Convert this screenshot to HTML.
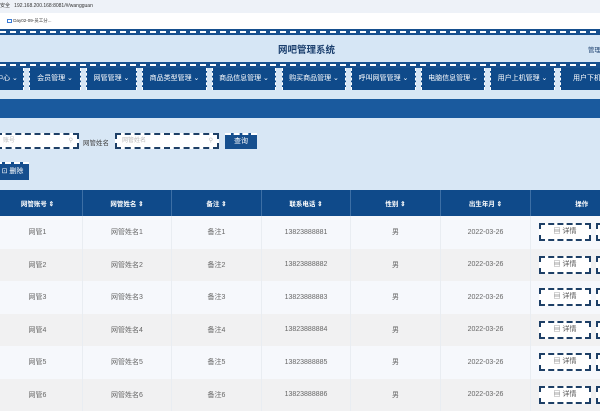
<!DOCTYPE html>
<html><head><meta charset="utf-8"><style>
*{margin:0;padding:0;box-sizing:border-box}
body{width:600px;height:400px;overflow:hidden;position:relative;background:#d8e7f5;font-family:"Liberation Sans","Noto Sans CJK SC",sans-serif;font-size:7px;color:#555}
.a{position:absolute;white-space:nowrap}
.dash{background:#164f8e;background-image:repeating-linear-gradient(90deg,#fff 0 6px,transparent 6px 10px);background-size:100% 2px;background-repeat:no-repeat;background-position:0 2px}
.nav{position:absolute;top:68px;height:22px;background:#0f4a8a;color:#fff;text-align:center;line-height:22px;font-size:7px;border-left:1px dashed #fff;border-right:1px dashed #fff;white-space:nowrap;overflow:hidden}
.inp{position:absolute;height:16px;background:#fff;border:2px dashed #1d3f66;color:#bbb;font-size:6px;line-height:12px;padding-left:5px;white-space:nowrap}
.btn{position:absolute;background:#164f8e;color:#fff;font-size:7px;text-align:center;border-top:2px dashed #fff;white-space:nowrap}
table{position:absolute;left:-8px;top:190px;border-collapse:collapse;width:640px;table-layout:fixed}
th{background:#0f4a8a;color:#fff;font-size:6.5px;height:26px;border-left:1px solid #3d6fa5;font-weight:bold;white-space:nowrap;overflow:hidden}
td{height:32.5px;text-align:center;font-size:7px;color:#666;border-left:1px solid #e9edf2;white-space:nowrap;overflow:hidden;padding:0}
tr:nth-child(odd) td{background:#f1f1f2}
tr:nth-child(even) td{background:#f6f8fc}
.ob{display:inline-block;width:52px;height:18px;border:2px dashed #1d3f66;background:#fff;line-height:14px;font-size:7px;color:#555;margin-right:5px;text-align:center;vertical-align:middle}
</style></head><body>
<div class="a" style="left:0;top:0;width:600px;height:13px;background:#eef2f8;font-size:5px;line-height:13px;color:#333">安全 &nbsp;&nbsp;192.168.200.168:8081/#/wangguan</div>
<div class="a" style="left:0;top:13px;width:600px;height:16px;background:#fff;font-size:4.5px;line-height:16px;color:#333;padding-left:7px"><span style="display:inline-block;width:5px;height:4px;border:1px solid #3a7bd5;vertical-align:middle"></span> Day02-09-员工分...</div>
<div class="a dash" style="left:0;top:29px;width:600px;height:6px"></div>
<div class="a" style="left:0;top:35px;width:600px;height:27px;background:#d6e6f5"></div>
<div class="a" style="left:278px;top:42px;font-size:9.5px;font-weight:bold;color:#1b3f6e">网吧管理系统</div>
<div class="a" style="left:588px;top:44px;font-size:6.5px;color:#1b3f6e">管理</div>
<div class="a dash" style="left:0;top:62px;width:600px;height:6px"></div>
<div class="a" style="left:0;top:68px;width:600px;height:22px;background:#d6e6f5"></div>
<div class="nav" style="left:-10px;width:34px">中心 ⌄</div>
<div class="nav" style="left:29px;width:52px">会员管理 ⌄</div>
<div class="nav" style="left:86px;width:51px">网管管理 ⌄</div>
<div class="nav" style="left:142px;width:65px">商品类型管理 ⌄</div>
<div class="nav" style="left:212px;width:64px">商品信息管理 ⌄</div>
<div class="nav" style="left:282px;width:64px">购买商品管理 ⌄</div>
<div class="nav" style="left:351px;width:65px">呼叫网管管理 ⌄</div>
<div class="nav" style="left:421px;width:64px">电脑信息管理 ⌄</div>
<div class="nav" style="left:490px;width:65px">用户上机管理 ⌄</div>
<div class="nav" style="left:560px;width:60px;text-align:left;padding-left:12px">用户下机</div>
<div class="a" style="left:0;top:99px;width:600px;height:19px;background:#1a5a9e"></div>
<div class="inp" style="left:-4px;top:133px;width:83px">账号<span style="float:right;margin-right:4px">⚲</span></div>
<div class="a" style="left:83px;top:137px;font-size:6.5px;color:#444">网管姓名</div>
<div class="inp" style="left:115px;top:133px;width:104px">网管姓名<span style="float:right;margin-right:4px">⚲</span></div>
<div class="btn" style="left:225px;top:133px;width:32px;height:16px;line-height:13px">查询</div>
<div class="btn" style="left:-4px;top:162px;width:33px;height:18px;line-height:15px">⊡ 删除</div>
<table>
<colgroup><col style="width:90px"><col style="width:89px"><col style="width:90px"><col style="width:89px"><col style="width:90px"><col style="width:90px"><col style="width:102px"></colgroup>
<tr><th>网管账号 ⇕</th><th>网管姓名 ⇕</th><th>备注 ⇕</th><th>联系电话 ⇕</th><th>性别 ⇕</th><th>出生年月 ⇕</th><th>操作</th></tr>
<tr><td>网管1</td><td>网管姓名1</td><td>备注1</td><td>13823888881</td><td>男</td><td>2022-03-26</td><td style="text-align:left;padding-left:8px"><span class="ob">▤ 详情</span><span class="ob">✎ 修</span></td></tr>
<tr><td>网管2</td><td>网管姓名2</td><td>备注2</td><td>13823888882</td><td>男</td><td>2022-03-26</td><td style="text-align:left;padding-left:8px"><span class="ob">▤ 详情</span><span class="ob">✎ 修</span></td></tr>
<tr><td>网管3</td><td>网管姓名3</td><td>备注3</td><td>13823888883</td><td>男</td><td>2022-03-26</td><td style="text-align:left;padding-left:8px"><span class="ob">▤ 详情</span><span class="ob">✎ 修</span></td></tr>
<tr><td>网管4</td><td>网管姓名4</td><td>备注4</td><td>13823888884</td><td>男</td><td>2022-03-26</td><td style="text-align:left;padding-left:8px"><span class="ob">▤ 详情</span><span class="ob">✎ 修</span></td></tr>
<tr><td>网管5</td><td>网管姓名5</td><td>备注5</td><td>13823888885</td><td>男</td><td>2022-03-26</td><td style="text-align:left;padding-left:8px"><span class="ob">▤ 详情</span><span class="ob">✎ 修</span></td></tr>
<tr><td>网管6</td><td>网管姓名6</td><td>备注6</td><td>13823888886</td><td>男</td><td>2022-03-26</td><td style="text-align:left;padding-left:8px"><span class="ob">▤ 详情</span><span class="ob">✎ 修</span></td></tr>
</table>
</body></html>
